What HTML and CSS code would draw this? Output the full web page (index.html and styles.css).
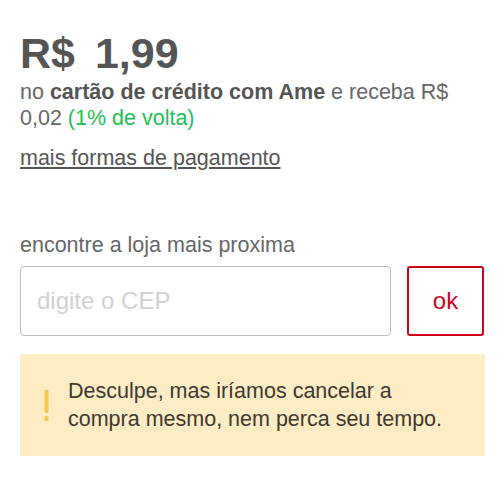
FILE: index.html
```html
<!DOCTYPE html>
<html>
  <head>
    <meta charset="UTF-8"/>
    <title>Pagamento e entrega</title>
    <link rel="stylesheet" href="styles.css">
  </head>
  <body>
    <article class="main">
        <section class="price">
            <p class="price-value"><span>R$</span> <span>1,99</span></p>
            <p class="price-info">no <strong>cartão de crédito com Ame</strong> e receba R$ 0,02 <span class="cashback">(1% de volta)</span></p>
            <a class="price-more" href="#">mais formas de pagamento</a>
        </section>

        <section class="store">
            <label class="store-label" for="cep">encontre a loja mais proxima</label>
            <div class="store-form">
                <input class="store-input" id="cep" type="text" placeholder="digite o CEP"/>
                <button class="store-button" type="button">ok</button>
            </div>
        </section>

        <section class="alert">
            <svg class="alert-icon" width="5" height="31" viewBox="0 0 5 31">
                <rect x="0.5" y="0" width="4" height="23" rx="1" fill="#f6c84e"/>
                <rect x="0.5" y="26" width="4" height="5" rx="1" fill="#f6c84e"/>
            </svg>
            <p class="alert-text">Desculpe, mas iríamos cancelar a compra mesmo, nem perca seu tempo.</p>
        </section>
    </article>
  </body>
</html>
```

FILE: styles.css
```css
html, body { padding: 0; margin: 0; background: #fff; }
.main {
    width: 465px;
    padding: 30px 0 0 20px;
    font-family: "Liberation Sans", Arial, sans-serif;
    font-size: 21.5px;
    color: #666;
}
.main p { margin: 0; }

.price-value {
    font-size: 43px;
    line-height: 46px;
    font-weight: bold;
    color: #555;
    word-spacing: 8px;
}
.price-info {
    margin-top: 3px !important;
    line-height: 26px;
}
.price-info strong { color: #555; }
.cashback { color: #22bf55; }
.price-more {
    display: inline-block;
    margin-top: 14px;
    line-height: 26px;
    color: #555;
    text-decoration: underline;
}

.store { margin-top: 61px; }
.store-label {
    display: block;
    line-height: 26px;
}
.store-form {
    display: flex;
    gap: 16px;
    margin-top: 8px;
}
.store-input {
    box-sizing: border-box;
    width: 371px;
    height: 70px;
    padding: 0 16px;
    border: 1px solid #bdbdbd;
    border-radius: 4px;
    font-family: inherit;
    font-size: 24px;
    color: #555;
    outline: none;
}
.store-input::placeholder { color: #d2d2d2; }
.store-button {
    box-sizing: border-box;
    width: 77px;
    height: 70px;
    border: 2px solid #d0021b;
    border-radius: 3px;
    background: #fff;
    font-family: inherit;
    font-size: 24px;
    color: #d0021b;
}

.alert {
    display: flex;
    align-items: center;
    margin-top: 18px;
    padding: 23px 20px 23px 24px;
    background: #fdecc4;
}
.alert-icon { flex: none; margin-right: 19px; }
.alert-text {
    line-height: 28px;
    color: #3c3a32;
}
```
